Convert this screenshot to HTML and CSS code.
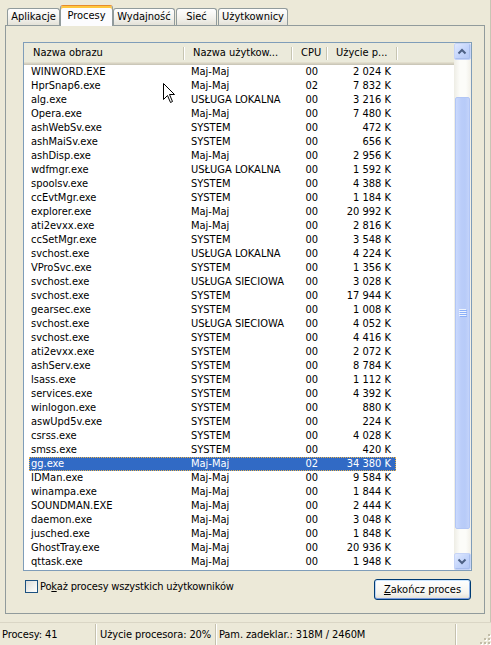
FILE: index.html
```html
<!DOCTYPE html>
<html lang="pl">
<head>
<meta charset="utf-8">
<title>Menedżer zadań</title>
<link rel="stylesheet" href="styles.css">
</head>
<body>
<div class="window">
  <div class="main">
    <div class="tabs">
      <div class="tab t-apps">Aplikacje</div>
      <div class="tab t-proc active">Procesy</div>
      <div class="tab t-perf">Wydajność</div>
      <div class="tab t-net">Sieć</div>
      <div class="tab t-users">Użytkownicy</div>
    </div>
    <div class="panel">
      <div class="listview">
        <div class="list-content">
          <div class="header">
            <div class="hcell h-name">Nazwa obrazu</div>
            <div class="hcell h-user">Nazwa użytkow...</div>
            <div class="hcell h-cpu">CPU</div>
            <div class="hcell h-mem">Użycie p...</div>
          </div>
          <div class="rows">
            <div class="row"><span class="c-name">WINWORD.EXE</span><span class="c-user">Maj-Maj</span><span class="c-cpu">00</span><span class="c-mem">2 024 K</span></div>
            <div class="row"><span class="c-name">HprSnap6.exe</span><span class="c-user">Maj-Maj</span><span class="c-cpu">02</span><span class="c-mem">7 832 K</span></div>
            <div class="row"><span class="c-name">alg.exe</span><span class="c-user">USŁUGA LOKALNA</span><span class="c-cpu">00</span><span class="c-mem">3 216 K</span></div>
            <div class="row"><span class="c-name">Opera.exe</span><span class="c-user">Maj-Maj</span><span class="c-cpu">00</span><span class="c-mem">7 480 K</span></div>
            <div class="row"><span class="c-name">ashWebSv.exe</span><span class="c-user">SYSTEM</span><span class="c-cpu">00</span><span class="c-mem">472 K</span></div>
            <div class="row"><span class="c-name">ashMaiSv.exe</span><span class="c-user">SYSTEM</span><span class="c-cpu">00</span><span class="c-mem">656 K</span></div>
            <div class="row"><span class="c-name">ashDisp.exe</span><span class="c-user">Maj-Maj</span><span class="c-cpu">00</span><span class="c-mem">2 956 K</span></div>
            <div class="row"><span class="c-name">wdfmgr.exe</span><span class="c-user">USŁUGA LOKALNA</span><span class="c-cpu">00</span><span class="c-mem">1 592 K</span></div>
            <div class="row"><span class="c-name">spoolsv.exe</span><span class="c-user">SYSTEM</span><span class="c-cpu">00</span><span class="c-mem">4 388 K</span></div>
            <div class="row"><span class="c-name">ccEvtMgr.exe</span><span class="c-user">SYSTEM</span><span class="c-cpu">00</span><span class="c-mem">1 184 K</span></div>
            <div class="row"><span class="c-name">explorer.exe</span><span class="c-user">Maj-Maj</span><span class="c-cpu">00</span><span class="c-mem">20 992 K</span></div>
            <div class="row"><span class="c-name">ati2evxx.exe</span><span class="c-user">Maj-Maj</span><span class="c-cpu">00</span><span class="c-mem">2 816 K</span></div>
            <div class="row"><span class="c-name">ccSetMgr.exe</span><span class="c-user">SYSTEM</span><span class="c-cpu">00</span><span class="c-mem">3 548 K</span></div>
            <div class="row"><span class="c-name">svchost.exe</span><span class="c-user">USŁUGA LOKALNA</span><span class="c-cpu">00</span><span class="c-mem">4 224 K</span></div>
            <div class="row"><span class="c-name">VProSvc.exe</span><span class="c-user">SYSTEM</span><span class="c-cpu">00</span><span class="c-mem">1 356 K</span></div>
            <div class="row"><span class="c-name">svchost.exe</span><span class="c-user">USŁUGA SIECIOWA</span><span class="c-cpu">00</span><span class="c-mem">3 028 K</span></div>
            <div class="row"><span class="c-name">svchost.exe</span><span class="c-user">SYSTEM</span><span class="c-cpu">00</span><span class="c-mem">17 944 K</span></div>
            <div class="row"><span class="c-name">gearsec.exe</span><span class="c-user">SYSTEM</span><span class="c-cpu">00</span><span class="c-mem">1 008 K</span></div>
            <div class="row"><span class="c-name">svchost.exe</span><span class="c-user">USŁUGA SIECIOWA</span><span class="c-cpu">00</span><span class="c-mem">4 052 K</span></div>
            <div class="row"><span class="c-name">svchost.exe</span><span class="c-user">SYSTEM</span><span class="c-cpu">00</span><span class="c-mem">4 416 K</span></div>
            <div class="row"><span class="c-name">ati2evxx.exe</span><span class="c-user">SYSTEM</span><span class="c-cpu">00</span><span class="c-mem">2 072 K</span></div>
            <div class="row"><span class="c-name">ashServ.exe</span><span class="c-user">SYSTEM</span><span class="c-cpu">00</span><span class="c-mem">8 784 K</span></div>
            <div class="row"><span class="c-name">lsass.exe</span><span class="c-user">SYSTEM</span><span class="c-cpu">00</span><span class="c-mem">1 112 K</span></div>
            <div class="row"><span class="c-name">services.exe</span><span class="c-user">SYSTEM</span><span class="c-cpu">00</span><span class="c-mem">4 392 K</span></div>
            <div class="row"><span class="c-name">winlogon.exe</span><span class="c-user">SYSTEM</span><span class="c-cpu">00</span><span class="c-mem">880 K</span></div>
            <div class="row"><span class="c-name">aswUpd5v.exe</span><span class="c-user">SYSTEM</span><span class="c-cpu">00</span><span class="c-mem">224 K</span></div>
            <div class="row"><span class="c-name">csrss.exe</span><span class="c-user">SYSTEM</span><span class="c-cpu">00</span><span class="c-mem">4 028 K</span></div>
            <div class="row"><span class="c-name">smss.exe</span><span class="c-user">SYSTEM</span><span class="c-cpu">00</span><span class="c-mem">420 K</span></div>
            <div class="row sel"><span class="c-name">gg.exe</span><span class="c-user">Maj-Maj</span><span class="c-cpu">02</span><span class="c-mem">34 380 K</span></div>
            <div class="row"><span class="c-name">IDMan.exe</span><span class="c-user">Maj-Maj</span><span class="c-cpu">00</span><span class="c-mem">9 584 K</span></div>
            <div class="row"><span class="c-name">winampa.exe</span><span class="c-user">Maj-Maj</span><span class="c-cpu">00</span><span class="c-mem">1 844 K</span></div>
            <div class="row"><span class="c-name">SOUNDMAN.EXE</span><span class="c-user">Maj-Maj</span><span class="c-cpu">00</span><span class="c-mem">2 444 K</span></div>
            <div class="row"><span class="c-name">daemon.exe</span><span class="c-user">Maj-Maj</span><span class="c-cpu">00</span><span class="c-mem">3 048 K</span></div>
            <div class="row"><span class="c-name">jusched.exe</span><span class="c-user">Maj-Maj</span><span class="c-cpu">00</span><span class="c-mem">1 848 K</span></div>
            <div class="row"><span class="c-name">GhostTray.exe</span><span class="c-user">Maj-Maj</span><span class="c-cpu">00</span><span class="c-mem">20 936 K</span></div>
            <div class="row"><span class="c-name">qttask.exe</span><span class="c-user">Maj-Maj</span><span class="c-cpu">00</span><span class="c-mem">1 948 K</span></div>
          </div>
        </div>
        <div class="vscroll">
          <div class="sb-btn">
            <svg width="15" height="15" viewBox="0 0 15 15"><polyline points="3.5,9.5 7,6 10.5,9.5" fill="none" stroke="#4D6185" stroke-width="2"/></svg>
          </div>
          <div class="sb-track">
            <div class="sb-thumb">
              <svg width="8" height="8" viewBox="0 0 8 8">
                <rect x="0" y="0" width="7" height="1" fill="#EEF4FE"/><rect x="1" y="1" width="7" height="1" fill="#8CB0F8"/>
                <rect x="0" y="2" width="7" height="1" fill="#EEF4FE"/><rect x="1" y="3" width="7" height="1" fill="#8CB0F8"/>
                <rect x="0" y="4" width="7" height="1" fill="#EEF4FE"/><rect x="1" y="5" width="7" height="1" fill="#8CB0F8"/>
                <rect x="0" y="6" width="7" height="1" fill="#EEF4FE"/><rect x="1" y="7" width="7" height="1" fill="#8CB0F8"/>
              </svg>
            </div>
          </div>
          <div class="sb-btn">
            <svg width="15" height="15" viewBox="0 0 15 15"><polyline points="3.5,5.5 7,9 10.5,5.5" fill="none" stroke="#4D6185" stroke-width="2"/></svg>
          </div>
        </div>
      </div>
      <div class="footer">
        <div class="check"><span class="box"></span><span class="check-label">Po<u>k</u>aż procesy wszystkich użytkowników</span></div>
        <div class="button"><u>Z</u>akończ proces</div>
      </div>
    </div>
  </div>
  <div class="statusbar">
    <div class="pane p1">Procesy: 41</div>
    <div class="pane p2">Użycie procesora: 20%</div>
    <div class="pane p3">Pam. zadeklar.: 318M / 2460M</div>
    <div class="grip">
      <svg width="12" height="12" viewBox="0 0 12 12">
        <rect x="10" y="2" width="2" height="2" fill="#fff"/><rect x="9" y="1" width="2" height="2" fill="#C2BDA8"/>
        <rect x="6" y="6" width="2" height="2" fill="#fff"/><rect x="5" y="5" width="2" height="2" fill="#C2BDA8"/>
        <rect x="10" y="6" width="2" height="2" fill="#fff"/><rect x="9" y="5" width="2" height="2" fill="#C2BDA8"/>
        <rect x="2" y="10" width="2" height="2" fill="#fff"/><rect x="1" y="9" width="2" height="2" fill="#C2BDA8"/>
        <rect x="6" y="10" width="2" height="2" fill="#fff"/><rect x="5" y="9" width="2" height="2" fill="#C2BDA8"/>
        <rect x="10" y="10" width="2" height="2" fill="#fff"/><rect x="9" y="9" width="2" height="2" fill="#C2BDA8"/>
      </svg>
    </div>
  </div>
  <svg class="cursor" width="13" height="21" viewBox="0 0 13 21">
    <polygon points="0.5,0.5 0.5,16.5 4.5,12.5 7.5,19.5 9.5,18.5 6.5,11.5 11.5,11.5" fill="#fff" stroke="#000" stroke-width="1"/>
  </svg>
</div>
</body>
</html>
```

FILE: styles.css
```css
* { box-sizing: border-box; }
html, body { margin: 0; padding: 0; }
body {
  width: 491px;
  height: 645px;
  overflow: hidden;
  background: #ECE9D8;
  font-family: "DejaVu Sans Condensed", "DejaVu Sans", sans-serif;
  font-stretch: condensed;
  font-size: 11px;
  color: #000;
}
.window {
  position: relative;
  width: 491px;
  height: 645px;
  display: flex;
  flex-direction: column;
}
.main {
  height: 622px;
  padding: 0 5px;
  border-right: 1px solid #C8C5B4;
}

/* Tabs */
.tabs {
  display: flex;
  align-items: flex-end;
  height: 25px;
  padding-left: 2px;
}
.tab {
  height: 17px;
  border: 1px solid #919B9C;
  border-bottom: 0;
  border-radius: 3px 3px 0 0;
  background: linear-gradient(#FFFFFF, #F3F2ED 55%, #E4E2D8);
  text-align: center;
  line-height: 16px;
  white-space: nowrap;
  margin-left: 1px;
}
.t-apps { width: 53px; margin-left: 0; }
.t-proc { width: 53px; margin-left: 0; }
.t-perf { width: 62px; margin-left: 0; }
.t-net { width: 41px; }
.t-users { width: 70px; }
.tab.active {
  position: relative;
  z-index: 2;
  height: 21px;
  margin-bottom: -1px;
  border-top: 1px solid #E68B2C;
  background: #FCFCFE;
  box-shadow: inset 0 2px 0 #FFC73C;
  padding-top: 2px;
  line-height: 16px;
}

/* Panel */
.panel {
  height: 589px;
  border: 1px solid #919B9C;
  background: #ECE9D8;
  padding: 16px 0 0 17px;
}
.listview {
  width: 449px;
  height: 529px;
  border: 1px solid #7F9DB9;
  background: #FFFFFF;
  display: flex;
  overflow: hidden;
}
.list-content {
  flex: 1;
  overflow: hidden;
}
.header {
  display: flex;
  height: 22px;
  background: #EBEADB;
  box-shadow: inset 0 -1px 0 #CBC7B8, inset 0 -2px 0 #D6D2C2, inset 0 -3px 0 #E2DECD;
}
.hcell {
  position: relative;
  padding-left: 8px;
  line-height: 20px;
  white-space: nowrap;
  overflow: hidden;
}
.hcell::after {
  content: "";
  position: absolute;
  right: 1px;
  top: 4px;
  bottom: 5px;
  width: 1px;
  background: #C7C5B2;
  box-shadow: 1px 0 0 #FFFFFF;
}
.h-name { width: 161px; padding-left: 9px; }
.h-user { width: 108px; }
.h-cpu { width: 35px; }
.h-mem { width: 70px; }

.row {
  display: flex;
  height: 14px;
  line-height: 14px;
  margin-left: 5px;
  width: 367px;
  white-space: nowrap;
}
.c-name { width: 155px; padding-left: 2px; }
.c-user { width: 107px; padding-left: 7px; }
.c-cpu { width: 35px; text-align: right; padding-right: 8px; }
.c-mem { width: 70px; text-align: right; padding-right: 5px; }
.row.sel {
  background: #316AC5;
  color: #FFFFFF;
  outline: 1px dotted #E9B44C;
  outline-offset: -1px;
}

/* Scrollbar */
.vscroll {
  width: 17px;
  display: flex;
  flex-direction: column;
  background: linear-gradient(to right, #EEEDE5, #FCFCF9 35%, #FCFCF9 70%, #F1EFE7);
}
.sb-btn {
  height: 17px;
  border: 1px solid #C6D4F7;
  border-radius: 2px;
  background: linear-gradient(135deg, #E0E9FE, #C4D5FB 50%, #B4C7F5);
  box-shadow: inset -1px -1px 0 #A9BEEE;
  display: flex;
  align-items: center;
  justify-content: center;
}
.sb-btn svg { display: block; }
.sb-track {
  flex: 1;
  padding-top: 37px;
}
.sb-thumb {
  width: 15px;
  height: 432px;
  margin-left: 1px;
  border: 1px solid #B2C6F5;
  border-radius: 2px;
  background: linear-gradient(to right, #CAD9FD, #BACDF9 40%, #B7CBF8 70%, #C3D3FA);
  display: flex;
  align-items: center;
  justify-content: center;
}
.sb-thumb svg { display: block; }

/* Footer */
.footer {
  width: 449px;
  margin-top: 8px;
  height: 21px;
  display: flex;
  justify-content: space-between;
  align-items: flex-start;
}
.check {
  display: flex;
  align-items: center;
  margin-left: 2px;
  margin-top: 1px;
  height: 13px;
}
.box {
  width: 13px;
  height: 13px;
  border: 1px solid #1C5180;
  background: linear-gradient(135deg, #DCDCD7, #F6F6F3 70%, #FFFFFF);
}
.check-label {
  margin-left: 2px;
  line-height: 13px;
  white-space: nowrap;
  letter-spacing: -0.15px;
}
.button {
  width: 97px;
  height: 21px;
  margin-right: 1px;
  border: 1px solid #003C74;
  border-radius: 3px;
  background: linear-gradient(#FFFFFF, #F5F4EF 70%, #E3E0D4);
  box-shadow: inset 0 1px 0 #CEE7FF, inset 0 -1px 0 #7A9BE0, inset 1px 0 0 #BCD4F6, inset -1px 0 0 #89ADE4;
  text-align: center;
  line-height: 19px;
  white-space: nowrap;
}
u { text-decoration: underline; text-underline-offset: 1px; }

/* Status bar */
.statusbar {
  height: 23px;
  display: flex;
  border-top: 1px solid #DAD6C5;
  line-height: 21px;
  white-space: nowrap;
  letter-spacing: -0.1px;
}
.pane {
  height: 21px;
  margin-top: 1px;
  border-right: 1px solid #C5C1AE;
  box-shadow: 1px 0 0 #FFFFFF;
}
.p1 { width: 96px; padding-left: 2px; }
.p2 { width: 120px; padding-left: 4px; }
.p3 { width: 240px; padding-left: 3px; }
.grip {
  flex: 1;
  display: flex;
  justify-content: flex-end;
  align-items: flex-end;
}
.grip svg { display: block; }

/* Mouse pointer overlay */
.cursor {
  position: absolute;
  left: 163px;
  top: 83px;
}
```
